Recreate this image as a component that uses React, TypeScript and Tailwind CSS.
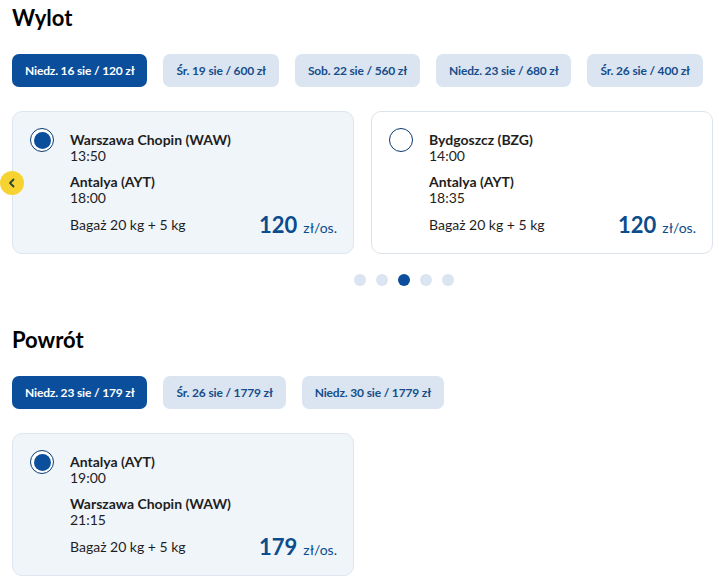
import React from 'react';

interface Tab {
    label: string;
    active?: boolean;
}

interface Flight {
    from: string;
    dep: string;
    to: string;
    arr: string;
    price: string;
    selected?: boolean;
}

const outTabs: Tab[] = [
    { label: 'Niedz. 16 sie / 120 zł', active: true },
    { label: 'Śr. 19 sie / 600 zł' },
    { label: 'Sob. 22 sie / 560 zł' },
    { label: 'Niedz. 23 sie / 680 zł' },
    { label: 'Śr. 26 sie / 400 zł' },
    { label: 'Niedz. 30 sie / 400 zł' },
];

const backTabs: Tab[] = [
    { label: 'Niedz. 23 sie / 179 zł', active: true },
    { label: 'Śr. 26 sie / 1779 zł' },
    { label: 'Niedz. 30 sie / 1779 zł' },
];

const outFlights: Flight[] = [
    { from: 'Warszawa Chopin (WAW)', dep: '13:50', to: 'Antalya (AYT)', arr: '18:00', price: '120', selected: true },
    { from: 'Bydgoszcz (BZG)', dep: '14:00', to: 'Antalya (AYT)', arr: '18:35', price: '120' },
];

const backFlight: Flight = {
    from: 'Antalya (AYT)', dep: '19:00', to: 'Warszawa Chopin (WAW)', arr: '21:15', price: '179', selected: true,
};

function DateTabs({ tabs }: { tabs: Tab[] }) {
    return (
        <div className="mt-[22px] flex gap-4 whitespace-nowrap">
            {tabs.map((t) => (
                <div
                    key={t.label}
                    className={`shrink-0 h-[33px] px-[13px] flex items-center rounded-[7px] text-[12px] font-bold tracking-[-0.16px] ${
                        t.active ? 'bg-[#0b4f9c] text-white' : 'bg-[#dbe5f1] text-[#174d8a]'
                    }`}
                >
                    {t.label}
                </div>
            ))}
        </div>
    );
}

function FlightCard({ f }: { f: Flight }) {
    return (
        <div
            className={`shrink-0 w-[342px] h-[143px] rounded-[10px] border pt-[16px] pl-[17px] pr-[16px] flex gap-4 ${
                f.selected ? 'bg-[#f0f5fa] border-[#dde5ee]' : 'bg-white border-[#dde3ea]'
            }`}
        >
            <div className="w-6 h-6 rounded-full border-[1.5px] border-[#0c3a6e] flex items-center justify-center shrink-0 bg-white">
                {f.selected && <div className="w-[17px] h-[17px] rounded-full bg-[#0b4f9c]" />}
            </div>
            <div className="flex-1 pt-[4px] text-[14px] leading-[16px] text-[#1e1e1e]">
                <div className="font-bold">{f.from}</div>
                <div>{f.dep}</div>
                <div className="mt-[10px] font-bold">{f.to}</div>
                <div>{f.arr}</div>
                <div className="mt-[7px] h-[24px] flex items-center justify-between">
                    <span>Bagaż 20 kg + 5 kg</span>
                    <span className="flex items-baseline text-[#0b4c8c]">
                        <span className="text-[22px] font-bold leading-[24px]">{f.price}</span>
                        <span className="ml-[6px] text-[14px]">zł/os.</span>
                    </span>
                </div>
            </div>
        </div>
    );
}

export default function App() {
    return (
        <div className="w-full overflow-hidden bg-white pt-[4px] pl-3 pb-3" style={{ fontFamily: 'Lato, "Open Sans", sans-serif' }}>
            <h2 className="text-[22px] leading-[28px] font-bold text-black">Wylot</h2>
            <DateTabs tabs={outTabs} />

            <div className="relative mt-6 flex gap-[17px]">
                {outFlights.map((f) => (
                    <FlightCard key={f.from} f={f} />
                ))}
                <button className="absolute left-0 top-1/2 -translate-x-1/2 -translate-y-1/2 w-6 h-6 rounded-full bg-[#f7d332] flex items-center justify-center">
                    <svg width="12" height="12" viewBox="0 0 12 12" fill="none">
                        <path d="M7.5 2.5 4 6l3.5 3.5" stroke="#24453a" strokeWidth="1.8" strokeLinecap="round" strokeLinejoin="round" />
                    </svg>
                </button>
            </div>

            <div className="mt-5 pl-[342px] flex gap-[10px]">
                {[0, 1, 2, 3, 4].map((i) => (
                    <span key={i} className={`w-3 h-3 rounded-full ${i === 2 ? 'bg-[#0b4f9c]' : 'bg-[#dbe5f1]'}`} />
                ))}
            </div>

            <h2 className="mt-10 text-[22px] leading-[28px] font-bold text-black">Powrót</h2>
            <DateTabs tabs={backTabs} />
            <div className="mt-6 flex">
                <FlightCard f={backFlight} />
            </div>
        </div>
    );
}
